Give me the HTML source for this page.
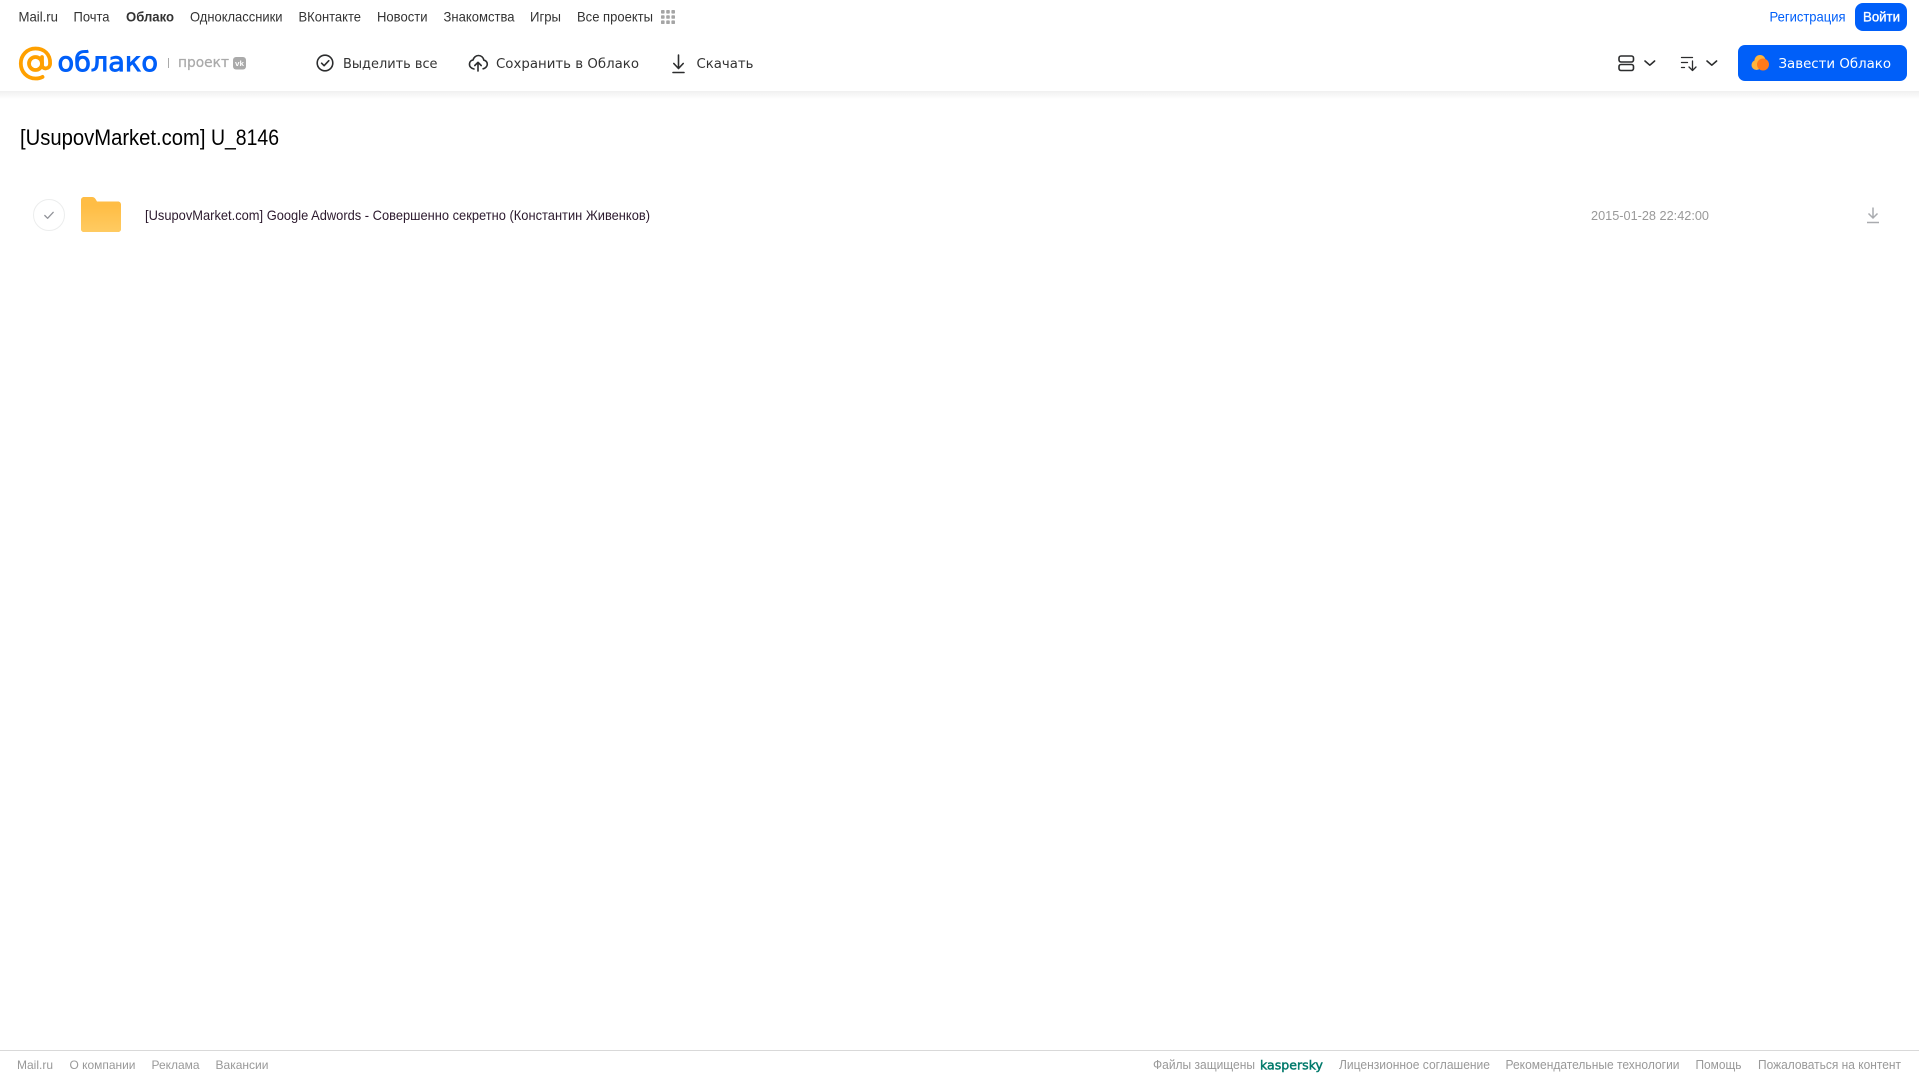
<!DOCTYPE html>
<html lang="ru">
<head>
<meta charset="utf-8">
<title>Облако</title>
<style>
html,body{margin:0;padding:0;background:#fff;width:1919px;height:1079px;overflow:hidden}
svg{display:block;position:absolute;left:0;top:0}
text{font-family:"Liberation Sans",Arial,sans-serif;dominant-baseline:alphabetic}
.n{font-size:14px;fill:#333}
.f{font-size:12px;fill:#999}
.g{font-size:13px;fill:#999}
.t{font-family:"DejaVu Sans",sans-serif;font-size:13.5px;fill:#333}
</style>
</head>
<body>
<svg width="1919" height="1079" viewBox="0 0 1919 1079" xmlns="http://www.w3.org/2000/svg">
<defs>
<linearGradient id="sh" x1="0" y1="0" x2="0" y2="1"><stop offset="0" stop-color="#f0f0f0"/><stop offset="1" stop-color="#fff"/></linearGradient>
<linearGradient id="fo" x1="0" y1="0" x2="0" y2="1"><stop offset="0" stop-color="#ffbd45"/><stop offset="1" stop-color="#ffcb62"/></linearGradient>
</defs>
<rect x="0" y="91" width="1919" height="8" fill="url(#sh)"/>

<!-- top nav -->
<text class="n" x="18.5" y="21.5" textLength="39.5" lengthAdjust="spacingAndGlyphs">Mail.ru</text>
<text class="n" x="73.5" y="21.5" textLength="36" lengthAdjust="spacingAndGlyphs">Почта</text>
<text class="n" x="126" y="21.5" textLength="48" lengthAdjust="spacingAndGlyphs" font-weight="700">Облако</text>
<text class="n" x="190" y="21.5" textLength="92.5" lengthAdjust="spacingAndGlyphs">Одноклассники</text>
<text class="n" x="298.5" y="21.5" textLength="62.5" lengthAdjust="spacingAndGlyphs">ВКонтакте</text>
<text class="n" x="377" y="21.5" textLength="50.5" lengthAdjust="spacingAndGlyphs">Новости</text>
<text class="n" x="443.5" y="21.5" textLength="71" lengthAdjust="spacingAndGlyphs">Знакомства</text>
<text class="n" x="530" y="21.5" textLength="31" lengthAdjust="spacingAndGlyphs">Игры</text>
<text class="n" x="577" y="21.5" textLength="76" lengthAdjust="spacingAndGlyphs">Все проекты</text>
<g fill="#a5a5a5">
<rect x="661" y="10" width="3.6" height="3.6" rx=".8"/><rect x="666.2" y="10" width="3.6" height="3.6" rx=".8"/><rect x="671.4" y="10" width="3.6" height="3.6" rx=".8"/>
<rect x="661" y="15.2" width="3.6" height="3.6" rx=".8"/><rect x="666.2" y="15.2" width="3.6" height="3.6" rx=".8"/><rect x="671.4" y="15.2" width="3.6" height="3.6" rx=".8"/>
<rect x="661" y="20.4" width="3.6" height="3.6" rx=".8"/><rect x="666.2" y="20.4" width="3.6" height="3.6" rx=".8"/><rect x="671.4" y="20.4" width="3.6" height="3.6" rx=".8"/>
</g>
<text x="1769.5" y="21.5" font-size="14" fill="#005ff9" textLength="76" lengthAdjust="spacingAndGlyphs">Регистрация</text>
<rect x="1855" y="3" width="52" height="28" rx="8" fill="#005ff9"/>
<text x="1863" y="21.5" font-size="14" fill="#fff" stroke="#fff" stroke-width=".35" textLength="37" lengthAdjust="spacingAndGlyphs">Войти</text>

<!-- logo -->
<g fill="none" stroke="#ffa000" stroke-width="3.8" stroke-linecap="round">
<circle cx="35.500" cy="63.500" r="6.500"/>
<path d="M42 57v8c0 4.800 7.900 4.800 8.100-1.500C50.500 54 43.900 48.500 35.500 48.500 27.200 48.500 20.800 55 20.800 63.500S27.200 78.500 35.500 78.500c2.800 0 5-.5 7-1.600"/>
</g>
<text x="57.500" y="71" style="font-family:'DejaVu Sans',sans-serif" font-size="27" fill="#005ff9" stroke="#005ff9" stroke-width=".9" textLength="100.500" lengthAdjust="spacingAndGlyphs">облако</text>
<rect x="168" y="58" width="1" height="10" fill="#aaa"/>
<text x="178" y="67" style="font-family:'DejaVu Sans',sans-serif" font-size="14" fill="#aaa" stroke="#aaa" stroke-width=".25" textLength="51" lengthAdjust="spacingAndGlyphs">проект</text>
<rect x="233" y="57" width="13" height="12.500" rx="3" fill="#aaa"/>
<text x="235" y="66" font-size="7.500" font-weight="700" fill="#fff" textLength="9" lengthAdjust="spacingAndGlyphs">vk</text>

<!-- toolbar -->
<g fill="none" stroke="#2c2d2e" stroke-width="1.600" stroke-linecap="round" stroke-linejoin="round">
<circle cx="325" cy="63" r="7.800"/>
<path d="M321.600 63.200l2.500 2.500 4.700-5"/>
<path d="M474 69c-3-.5-4.800-2.700-4.500-5.300.2-2 1.700-3.400 3.500-3.600.7-2.800 3-4.600 5.400-4.600 2.800 0 5 1.900 5.500 4.700 2 .3 3.500 2 3.400 4.100-.1 2.200-1.900 4.100-4.200 4.500"/>
<path d="M478 71v-8.500M474.800 65.500l3.200-3.200 3.200 3.200"/>
<path d="M678.500 55v13M673.800 63.500l4.700 5 4.700-5M673 72.500h11"/>
</g>
<text class="t" x="343" y="68" textLength="94.500" lengthAdjust="spacingAndGlyphs">Выделить все</text>
<text class="t" x="496" y="68" textLength="143" lengthAdjust="spacingAndGlyphs">Сохранить в Облако</text>
<text class="t" x="696.500" y="68" textLength="57" lengthAdjust="spacingAndGlyphs">Скачать</text>

<!-- right toolbar -->
<g fill="none" stroke="#2c2d2e" stroke-width="1.600" stroke-linecap="round" stroke-linejoin="round">
<rect x="1619" y="56" width="14.500" height="6" rx="2"/>
<rect x="1619" y="64.500" width="14.500" height="6" rx="2"/>
<path d="M1645 61l4.800 4.200 4.800-4.200"/>
<path d="M1681.500 57.500h11M1681.500 62.500h6M1681.500 67.500h3M1692.500 61v9M1689 67l3.500 3.500 3.500-3.500" stroke-width="1.300"/>
<path d="M1707 61l4.800 4.200 4.800-4.200"/>
</g>

<!-- CTA -->
<rect x="1738" y="45" width="169" height="36" rx="7" fill="#005ff9"/>
<circle cx="1756.500" cy="65" r="5" fill="#ffb33a"/>
<circle cx="1760" cy="60.500" r="5.500" fill="#ffb33a"/>
<circle cx="1763" cy="64.500" r="6" fill="#ff7a1a"/>
<text x="1778.500" y="68" style="font-family:'DejaVu Sans',sans-serif" font-size="13.500" fill="#fff" textLength="112.500" lengthAdjust="spacingAndGlyphs">Завести Облако</text>

<!-- title -->
<text x="20" y="145" font-size="22" fill="#000" textLength="185.500" lengthAdjust="spacingAndGlyphs">[UsupovMarket.com]</text>
<text x="211" y="145" font-size="22" fill="#000" textLength="68" lengthAdjust="spacingAndGlyphs">U_8146</text>

<!-- row -->
<circle cx="49" cy="215" r="15.500" fill="#fff" stroke="#eceded" stroke-width="1"/>
<path d="M44.800 215.500l2.800 2.800 5.600-6" fill="none" stroke="#919399" stroke-width="1.300" stroke-linecap="round" stroke-linejoin="round"/>
<path d="M81 200c0-1.700 1.300-3 3-3h8c1.500 0 2.700.8 3.500 2l1.500 2.500h21c1.700 0 3 1.300 3 3V229c0 1.700-1.300 3-3 3H84c-1.700 0-3-1.300-3-3z" fill="#ffbd45"/>
<path d="M81 206h40v23c0 1.700-1.300 3-3 3H84c-1.700 0-3-1.300-3-3z" fill="url(#fo)"/>
<text x="145" y="220" font-size="14" fill="#2c1a2e" textLength="505" lengthAdjust="spacingAndGlyphs">[UsupovMarket.com] Google Adwords - Совершенно секретно (Константин Живенков)</text>
<text x="1591" y="220" font-size="13" fill="#999" textLength="118" lengthAdjust="spacingAndGlyphs">2015-01-28 22:42:00</text>
<path d="M1873 207.500v10.500M1868.500 213.500l4.500 4.500 4.500-4.500M1867 222.500h12" fill="none" stroke="#a9abaf" stroke-width="1.500"/>

<!-- footer -->
<rect x="0" y="1050" width="1919" height="1" fill="#d9d9d9"/>
<text class="f" x="17" y="1069" textLength="36" lengthAdjust="spacingAndGlyphs">Mail.ru</text>
<text class="f" x="69.500" y="1069" textLength="66" lengthAdjust="spacingAndGlyphs">О компании</text>
<text class="f" x="151.500" y="1069" textLength="48" lengthAdjust="spacingAndGlyphs">Реклама</text>
<text class="f" x="215.500" y="1069" textLength="53" lengthAdjust="spacingAndGlyphs">Вакансии</text>
<text class="g" x="1153" y="1069" textLength="102" lengthAdjust="spacingAndGlyphs">Файлы защищены</text>
<text x="1260" y="1069.500" style="font-family:'DejaVu Sans',sans-serif" font-size="12.500" fill="#00796b" stroke="#00796b" stroke-width=".45" textLength="63" lengthAdjust="spacingAndGlyphs">kaspersky</text>
<text class="g" x="1339" y="1069" textLength="151" lengthAdjust="spacingAndGlyphs">Лицензионное соглашение</text>
<text class="g" x="1505.500" y="1069" textLength="174" lengthAdjust="spacingAndGlyphs">Рекомендательные технологии</text>
<text class="g" x="1695.500" y="1069" textLength="46" lengthAdjust="spacingAndGlyphs">Помощь</text>
<text class="g" x="1758" y="1069" textLength="143" lengthAdjust="spacingAndGlyphs">Пожаловаться на контент</text>
</svg>
</body>
</html>
